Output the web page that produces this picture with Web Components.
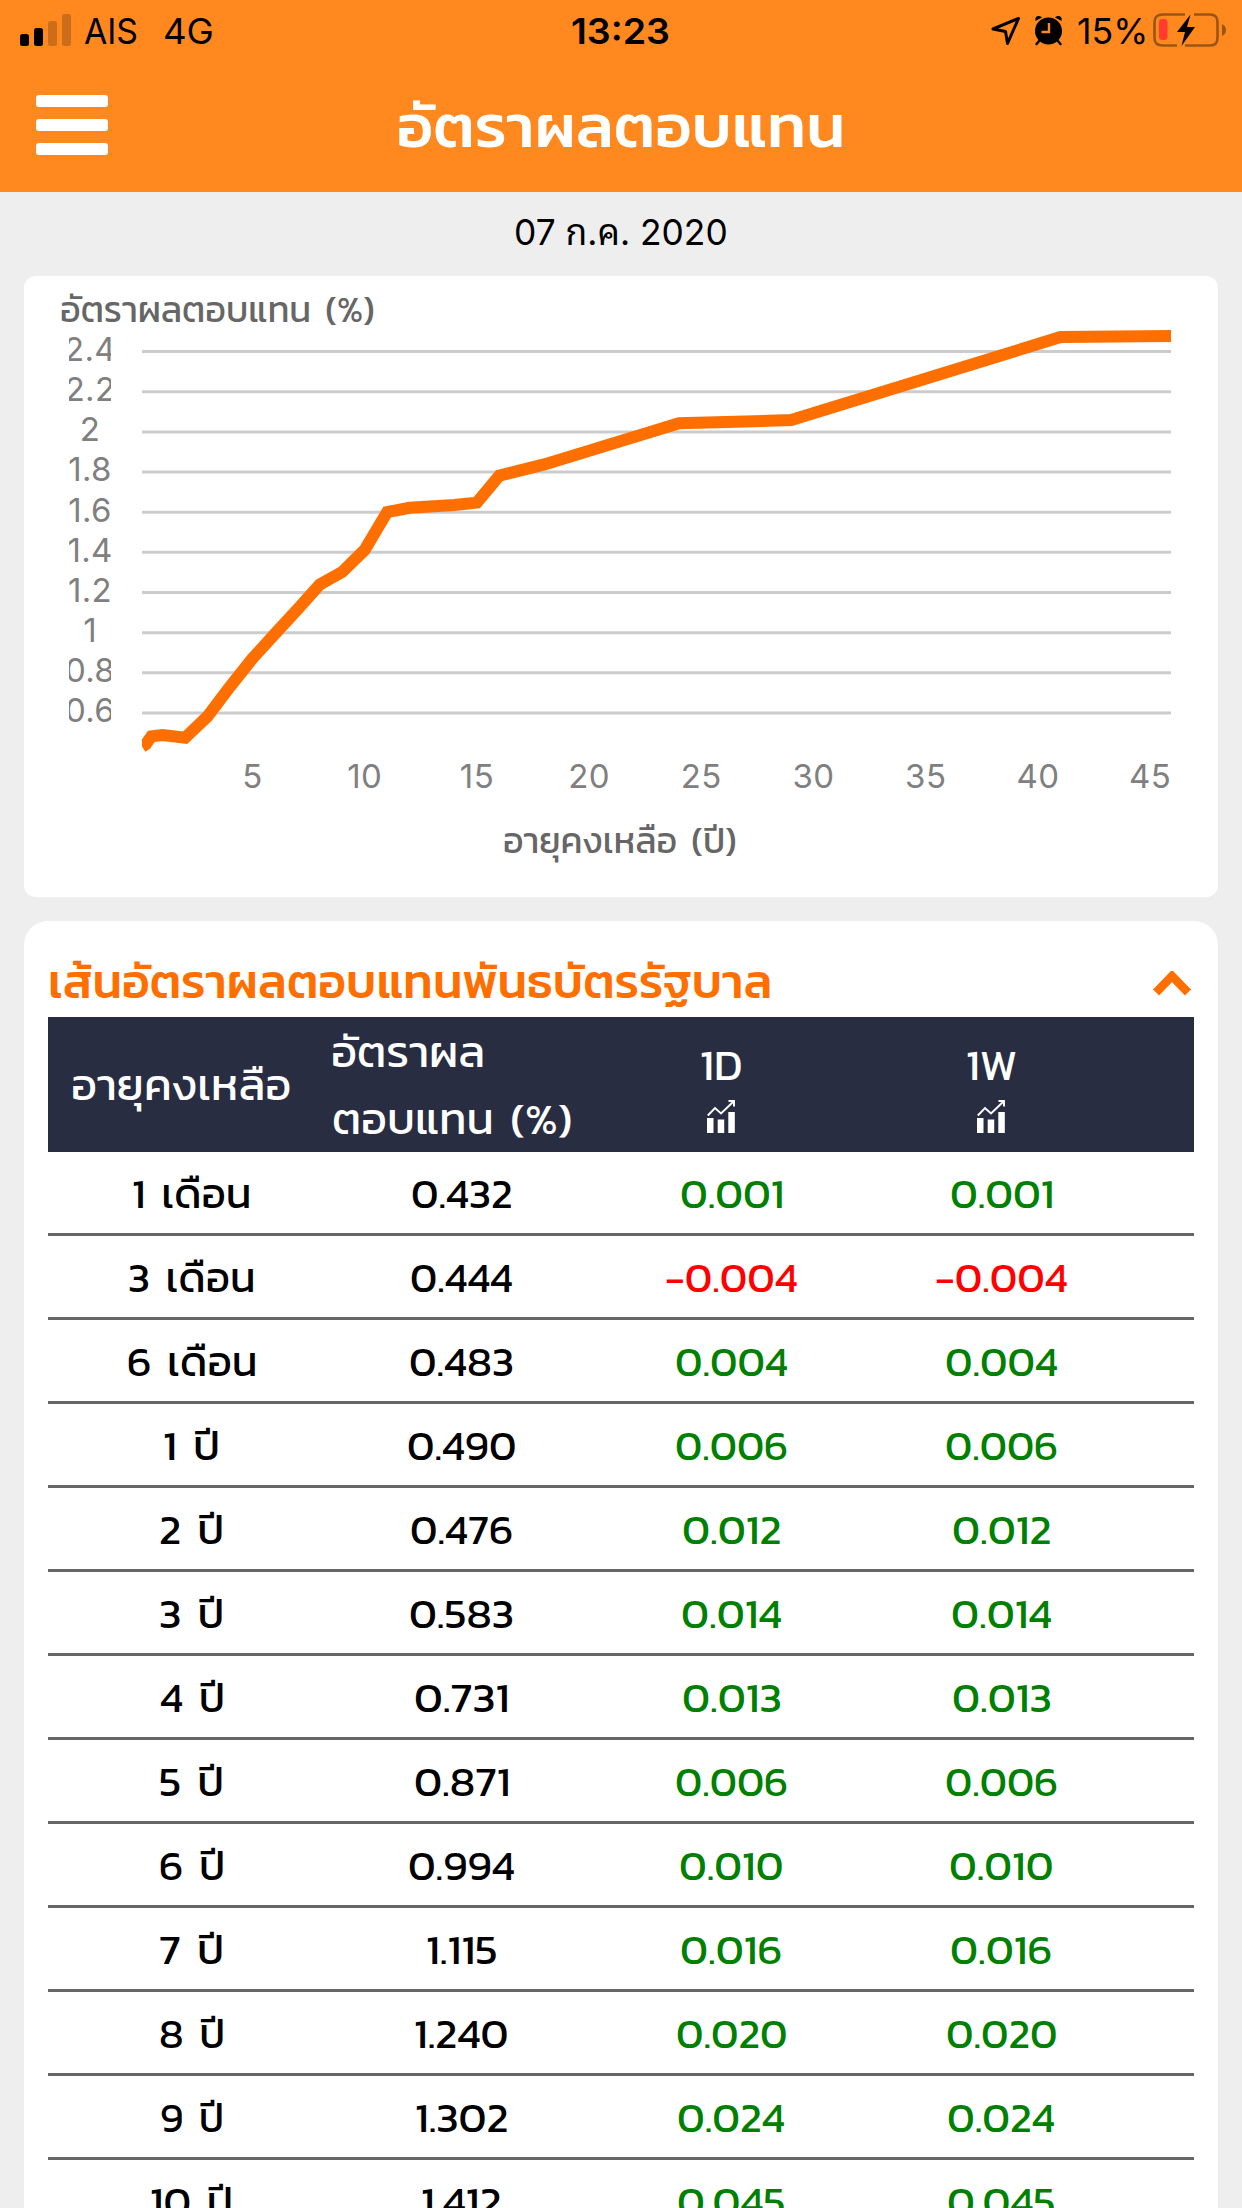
<!DOCTYPE html>
<html lang="th">
<head>
<meta charset="utf-8">
<title>อัตราผลตอบแทน</title>
<style>
  body {
    margin: 0;
    width: 1242px;
    height: 2208px;
    overflow: hidden;
    background: #eee;
    color: #000;
    font-family: Kanit, Inter, "Noto Sans Thai", "Noto Sans", sans-serif;
  }
</style>
</head>
<body>
<yield-app></yield-app>

<script>
// Text squeezed or stretched to an exact ink width: <fit-text w="120">...</fit-text>
class FitText extends HTMLElement {
  constructor() {
    super();
    this.attachShadow({ mode: "open" });
    this.shadowRoot.innerHTML = `
    <style>
      :host { display: inline-block; white-space: nowrap; text-align: left; }
      span { display: inline-block; transform-origin: 0 50%; }
    </style>
    <span><slot></slot></span>
    `;
  }

  connectedCallback() {
    const w = Number(this.getAttribute("w"));
    const style = getComputedStyle(this);
    const ctx = document.createElement("canvas").getContext("2d");
    ctx.font = `${style.fontWeight} ${style.fontSize} ${style.fontFamily}`;
    ctx.wordSpacing = style.wordSpacing; // the canvas does not pick this up from the font string
    const m = ctx.measureText(this.textContent);
    const scale = w / (m.actualBoundingBoxRight + m.actualBoundingBoxLeft);
    const span = this.shadowRoot.querySelector("span");
    span.style.transform = `translateX(${m.actualBoundingBoxLeft * scale}px) scaleX(${scale})`;
    this.style.width = w + "px";
  }
}
customElements.define("fit-text", FitText);

class StatusBar extends HTMLElement {
  constructor() {
    super();
    this.attachShadow({ mode: "open" });
    this.shadowRoot.innerHTML = `
    <style>
      :host {
        display: grid;
        grid-template-columns: 1fr auto 1fr;
        height: 63px;
        padding: 0 15px 0 20px;
        font-family: Inter, sans-serif;
        font-size: 36px;
        line-height: 62px;
      }
      .side { display: flex; }
      .right { justify-content: flex-end; }
      .time { font-weight: 600; margin-left: -6px; }
      svg { display: block; flex: none; }
    </style>
    <div class="side">
      <svg width="52" height="62">
        <rect x="0" y="34" width="9" height="12" rx="2.5"/>
        <rect x="14" y="28" width="9" height="18" rx="2.5"/>
        <rect x="28" y="21" width="9" height="25" rx="2.5" fill="#cc6d19"/>
        <rect x="42" y="14" width="9" height="32" rx="2.5" fill="#cc6d19"/>
      </svg>
      <fit-text w="53" style="margin-left:12px">AIS</fit-text>
      <fit-text w="47" style="margin-left:28px">4G</fit-text>
    </div>
    <div class="time"><fit-text w="97">13:23</fit-text></div>
    <div class="side right">
      <svg width="30" height="62" viewBox="0 0 30 62">
        <path d="M2 29 L27.5 18.5 L16.5 43.5 L14.5 31.5 Z" fill="none" stroke="#000" stroke-width="3" stroke-linejoin="round"/>
      </svg>
      <svg width="30" height="62" viewBox="0 0 30 62" style="margin-left:13px">
        <circle cx="14.500" cy="31" r="13.500"/>
        <path d="M1.500 21 Q.5 16 5 16 Q7 16 8 17.500 Z M27.500 21 Q28.500 16 24 16 Q22 16 21 17.500 Z"/>
        <path d="M6 40 L2.500 44 M23 40 L26.500 44" stroke="#000" stroke-width="2.500" stroke-linecap="round"/>
        <path d="M15 23 V32 H7.500" fill="none" stroke="#ff891f" stroke-width="2.400"/>
      </svg>
      <fit-text w="67" style="margin-left:14px">15%</fit-text>
      <svg width="74" height="62" viewBox="0 0 74 62" style="margin-left:8px">
        <path d="M32 14.500 H10 Q1.500 14.500 1.500 22 V38 Q1.500 45.500 10 45.500 H24 M41 14.500 H57 Q64.500 14.500 64.500 22 V38 Q64.500 45.500 57 45.500 H32" fill="none" stroke="#9a5515" stroke-width="2.600"/>
        <path d="M69 24 Q73 26 73 30 Q73 34 69 36 Z" fill="#9a5515"/>
        <rect x="6" y="19" width="8.500" height="21" rx="3.500" fill="#ff3b30"/>
        <path d="M37.500 14.500 L24 32 H32 L28.500 46 L42 27 H34 Z"/>
      </svg>
    </div>
    `;
  }
}
customElements.define("status-bar", StatusBar);

class AppHeader extends HTMLElement {
  constructor() {
    super();
    this.attachShadow({ mode: "open" });
    this.shadowRoot.innerHTML = `
    <style>
      :host { display: block; height: 192px; background: #ff891f; }
      .bar {
        display: grid;
        grid-template-columns: 72px 1fr 72px;
        height: 129px;
        padding: 0 36px;
      }
      .menu { display: grid; gap: 12px; align-content: start; padding-top: 32px; }
      .menu i { height: 12px; border-radius: 3px; background: #fff; }
      .title {
        text-align: center;
        color: #fff;
        font-size: 60px;
        font-weight: 500;
        line-height: 126px;
        padding-right: 2px;
      }
    </style>
    <status-bar></status-bar>
    <div class="bar">
      <div class="menu"><i></i><i></i><i></i></div>
      <div class="title"><slot></slot></div>
    </div>
    `;
  }
}
customElements.define("app-header", AppHeader);

// Yield curve, x = years to maturity, y = yield in percent
class YieldChart extends HTMLElement {
  constructor() {
    super();
    this.attachShadow({ mode: "open" });
    const points = [
      [0.083, 0.432], [0.25, 0.444], [0.5, 0.483], [1, 0.49], [2, 0.476], [3, 0.583], [4, 0.731],
      [5, 0.871], [6, 0.994], [7, 1.115], [8, 1.24], [9, 1.302], [10, 1.412], [11, 1.6],
      [12, 1.622], [14, 1.636], [15, 1.648], [16, 1.782], [18, 1.838], [24, 2.043],
      [29, 2.059], [41, 2.472], [46, 2.478],
    ];
    const x = (v) => v * 22.45 - 1.8;
    const y = (v) => 24.6 + (2.4 - v) * 200.75;
    const yTicks = [2.4, 2.2, 2, 1.8, 1.6, 1.4, 1.2, 1, 0.8, 0.6];
    const xTicks = [5, 10, 15, 20, 25, 30, 35, 40, 45];
    const line = points.map((p) => x(p[0]).toFixed(1) + "," + y(p[1]).toFixed(1)).join(" ");

    this.shadowRoot.innerHTML = `
    <style>
      :host {
        display: block;
        box-sizing: border-box;
        height: 621px;
        padding: 14px 47px 0 37px;
        border-radius: 12px;
        background: #fff;
        color: #666;
        font-size: 36px;
        word-spacing: 6px;
      }
      .name { height: 37px; line-height: 39px; }
      .plot { display: grid; grid-template-columns: 42px 1029px; column-gap: 31px; padding-left: 8px; }
      .y, .x { color: #808080; font-family: Inter, sans-serif; font-size: 33px; font-weight: 400; }
      .y { overflow: hidden; letter-spacing: .3px; }
      .y div { display: flex; justify-content: center; height: 40.15px; line-height: 45px; }
      .x {
        display: grid;
        grid-template-columns: repeat(9, 112.2px);
        margin-left: 135.500px;
        letter-spacing: .4px;
        line-height: 38px;
        text-align: center;
      }
      .foot { text-align: center; margin-top: 20px; padding-left: 7px; line-height: 51px; }
      svg { display: block; }
    </style>
    <div class="name"><fit-text w="313">อัตราผลตอบแทน (%)</fit-text></div>
    <div class="plot">
      <div class="y">${yTicks.map((t) => `<div>${t}</div>`).join("")}</div>
      <svg width="1029" height="430">
        ${yTicks.map((t) => `<line x1="0" x2="1029" y1="${y(t)}" y2="${y(t)}" stroke="#ccc" stroke-width="3"/>`).join("")}
        <polyline points="${line}" fill="none" stroke="#ff6f00" stroke-width="12"/>
      </svg>
    </div>
    <div class="x">${xTicks.map((t) => `<div>${t}</div>`).join("")}</div>
    <div class="foot"><fit-text w="232">อายุคงเหลือ (ปี)</fit-text></div>
    `;
  }
}
customElements.define("yield-chart", YieldChart);

class YieldRow extends HTMLElement {
  constructor() {
    super();
    this.attachShadow({ mode: "open" });
    this.shadowRoot.innerHTML = `
    <style>
      :host {
        display: grid;
        grid-template-columns: repeat(4, 270px);
        box-sizing: border-box;
        height: 84px;
        padding-left: 8px;
        border-bottom: 3px solid #666;
        font-size: 42px;
        line-height: 83px;
        word-spacing: 6px;
        text-align: center;
      }
    </style>
    <slot></slot>
    `;
  }
}
customElements.define("yield-row", YieldRow);

class TableHead extends HTMLElement {
  constructor() {
    super();
    this.attachShadow({ mode: "open" });
    const icon = `
      <svg width="28" height="33" viewBox="0 0 28 33">
        <path d="M0 18h6.500v15h-6.500z M10.700 19.500h6.500v13.500h-6.500z M21.300 12h6.500v21h-6.500z" fill="#fff"/>
        <path d="M.8 15.500 L8 8 L14 13.500 L26.500 1.500 M21.500 1 H27 V6.500" fill="none" stroke="#fff" stroke-width="1.900"/>
      </svg>`;
    this.shadowRoot.innerHTML = `
    <style>
      :host {
        display: grid;
        grid-template-columns: 285px 253px 270px 270px;
        height: 135px;
        background: #292d42;
        color: #fff;
        font-size: 44px;
        word-spacing: 6px;
      }
      .age { padding-left: 25px; line-height: 136px; }
      .rate { line-height: 67px; padding-top: 1px; }
      .period { display: flex; flex-direction: column; align-items: center; padding-top: 27px; line-height: 42px; }
      .period svg { margin-top: 14px; }
    </style>
    <div class="age"><fit-text w="217">อายุคงเหลือ</fit-text></div>
    <div class="rate"><fit-text w="150">อัตราผล</fit-text><br><fit-text w="238">ตอบแทน (%)</fit-text></div>
    <div class="period"><fit-text w="40">1D</fit-text>${icon}</div>
    <div class="period"><fit-text w="49">1W</fit-text>${icon}</div>
    `;
  }
}
customElements.define("table-head", TableHead);

class BondPanel extends HTMLElement {
  constructor() {
    super();
    this.attachShadow({ mode: "open" });
    // each cell is [text, width]
    const rows = [
      [["1 เดือน", 116], ["0.432", 99], ["0.001", 101]],
      [["3 เดือน", 124], ["0.444", 101], ["-0.004", 131]],
      [["6 เดือน", 127], ["0.483", 102], ["0.004", 111]],
      [["1 ปี", 54], ["0.490", 107], ["0.006", 111]],
      [["2 ปี", 62], ["0.476", 101], ["0.012", 97]],
      [["3 ปี", 62], ["0.583", 102], ["0.014", 99]],
      [["4 ปี", 63], ["0.731", 92], ["0.013", 97]],
      [["5 ปี", 62], ["0.871", 93], ["0.006", 111]],
      [["6 ปี", 63], ["0.994", 105], ["0.010", 102]],
      [["7 ปี", 62], ["1.115", 69], ["0.016", 100]],
      [["8 ปี", 63], ["1.240", 92], ["0.020", 109]],
      [["9 ปี", 61], ["1.302", 91], ["0.024", 106]],
      [["10 ปี", 80], ["1.412", 78], ["0.045", 106]],
    ];
    const cell = ([text, w], color) => `<div style="color:${color}"><fit-text w="${w}">${text}</fit-text></div>`;
    this.shadowRoot.innerHTML = `
    <style>
      :host {
        display: block;
        box-sizing: border-box;
        flex: 1;
        min-height: 0;
        overflow: hidden;
        margin-top: 24px;
        padding: 0 24px;
        border-radius: 24px 24px 0 0;
        background: #fff;
      }
      .title {
        display: flex;
        justify-content: space-between;
        height: 96px;
        padding: 0 3px 0 2px;
        color: #ff6f00;
        font-size: 47px;
        font-weight: 500;
        line-height: 121px;
      }
      svg { margin-top: 50px; }
    </style>
    <div class="title">
      <fit-text w="720">เส้นอัตราผลตอบแทนพันธบัตรรัฐบาล</fit-text>
      <svg width="38" height="25" viewBox="0 0 38 25">
        <path d="M3 21.500 L19 5 L35 21.500" fill="none" stroke="#ff6f00" stroke-width="8.500"/>
      </svg>
    </div>
    <table-head></table-head>
    ${rows.map(([age, rate, diff]) => {
      const color = diff[0].startsWith("-") ? "#f00" : "#008000";
      return `<yield-row>${cell(age, "#000")}${cell(rate, "#000")}${cell(diff, color)}${cell(diff, color)}</yield-row>`;
    }).join("")}
    `;
  }
}
customElements.define("bond-panel", BondPanel);

class YieldApp extends HTMLElement {
  constructor() {
    super();
    this.attachShadow({ mode: "open" });
    this.shadowRoot.innerHTML = `
    <style>
      :host { display: flex; flex-direction: column; height: 2208px; }
      .date {
        height: 84px;
        font-family: Inter, "Noto Sans Thai Looped", "Noto Looped Thai", Loma, Kanit, sans-serif;
        font-size: 36px;
        line-height: 80px;
        text-align: center;
      }
      main { display: flex; flex-direction: column; flex: 1; min-height: 0; padding: 0 24px; }
    </style>
    <app-header><fit-text w="443">อัตราผลตอบแทน</fit-text></app-header>
    <div class="date"><fit-text w="210">07 ก.ค. 2020</fit-text></div>
    <main>
      <yield-chart></yield-chart>
      <bond-panel></bond-panel>
    </main>
    `;
  }
}
customElements.define("yield-app", YieldApp);
</script>
</body>
</html>
